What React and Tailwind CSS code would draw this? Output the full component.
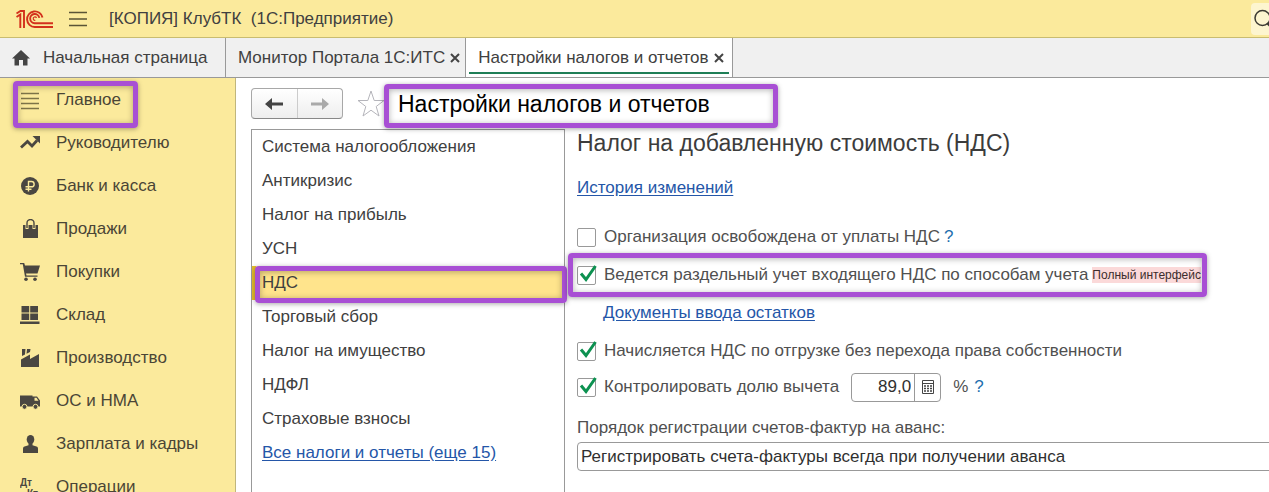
import React from "react";

const Icon = ({ children }) => (
  <svg viewBox="0 0 20 20" className="size-5 shrink-0" fill="#4a4741" aria-hidden="true">
    {children}
  </svg>
);

const sections = [
  {
    label: "Главное",
    marked: true,
    icon: <path d="M1 3.5h18M1 8.5h18M1 13.5h18M1 18.5h18" stroke="#7d7448" strokeWidth="1.4" fill="none" />,
  },
  {
    label: "Руководителю",
    icon: (
      <>
        <path d="M1 14.5l6.5-6 4.5 4.5 5-5.500" stroke="#4a4741" strokeWidth="2.8" fill="none" />
        <path d="M12.500 3H20v7.500z" />
      </>
    ),
  },
  {
    label: "Банк и касса",
    icon: (
      <>
        <circle cx="10" cy="10" r="9" />
        <path d="M8.500 15.500V5.500h3a2.600 2.600 0 0 1 0 5.300H5.500M5.500 13.200h6" stroke="#fbea9c" strokeWidth="1.4" fill="none" />
      </>
    ),
  },
  {
    label: "Продажи",
    icon: (
      <>
        <path d="M3 6h15v13H3z" />
        <path d="M7 10V5M14 10V5" stroke="#fbea9c" strokeWidth="3" fill="none" />
        <path d="M7 9V4a3.500 3.500 0 0 1 7 0V9" stroke="#4a4741" strokeWidth="1.400" fill="none" />
      </>
    ),
  },
  {
    label: "Покупки",
    icon: (
      <>
        <path d="M0 1h4.200l.8 2.500h15l-2.500 8H6l.5 2H17.500v1.300H5L2.800 2.300H0z" />
        <circle cx="6" cy="17.300" r="1.800" />
        <circle cx="15" cy="17.300" r="1.800" />
      </>
    ),
  },
  {
    label: "Склад",
    icon: <path d="M1.500 1h7.700v6.500H1.500zM10.200 1H18v6.500h-7.800zM1.500 8.500h7.700V15H1.500zM10.200 8.500H18V15h-7.800zM0 16.500h19.500V19H0z" />,
  },
  {
    label: "Производство",
    icon: <path d="M1 19v-7.500l9-5V11l9-5v13zM2 1h3.500L5 6.500 2 8zM7 1h3.500L10 4 6.500 5.800z" />,
  },
  {
    label: "ОС и НМА",
    icon: (
      <>
        <path d="M0 4.500h12.500v11H0zM12.500 5.500H17l3 4v6h-7.500z" />
        <path d="M14.500 6.800h2l2 3h-4z" fill="#fbea9c" />
        <circle cx="4.500" cy="15.800" r="2.500" stroke="#fbea9c" />
        <circle cx="15.500" cy="15.800" r="2.500" stroke="#fbea9c" />
      </>
    ),
  },
  {
    label: "Зарплата и кадры",
    icon: (
      <>
        <ellipse cx="10.500" cy="5.500" rx="3.800" ry="4.500" />
        <path d="M8.500 8h4v3.200l4 1.300c1 .4 1.500 1 1.500 2.500v4H3v-4c0-1.500.5-2.100 1.500-2.500l4-1.300z" />
      </>
    ),
  },
  {
    label: "Операции",
    icon: (
      <g className="font-bold" fontFamily="Liberation Sans, sans-serif" fontSize="10">
        <text x="0" y="9">Дт</text>
        <text x="7" y="20">Кт</text>
      </g>
    ),
  },
];

const taxes = [
  "Система налогообложения",
  "Антикризис",
  "Налог на прибыль",
  "УСН",
  "НДС",
  "Торговый сбор",
  "Налог на имущество",
  "НДФЛ",
  "Страховые взносы",
];

const Marker = ({ className }) => (
  <span
    aria-hidden="true"
    className={`pointer-events-none absolute z-10 rounded border-[5px] border-[#a84fd4] shadow-[0_1px_5px_rgba(0,0,0,0.35),inset_0_1px_6px_rgba(0,0,0,0.3)] ${className}`}
  />
);

const Close = ({ label }) => (
  <button type="button" aria-label={label} className="flex size-3 items-center justify-center">
    <svg viewBox="0 0 10 10" className="size-2.5">
      <path d="M1 1l8 8M9 1L1 9" stroke="#444" strokeWidth="2" />
    </svg>
  </button>
);

const Check = ({ id, label, checked, children }) => (
  <div className="flex h-[30px] items-center">
    <span className="relative mr-2 flex size-[19px] shrink-0">
      <input
        id={id}
        type="checkbox"
        defaultChecked={checked}
        className="peer size-[19px] appearance-none rounded-xs border border-[#999] bg-white"
      />
      <svg viewBox="0 0 19 19" className="pointer-events-none absolute inset-0 hidden size-[19px] overflow-visible peer-checked:block">
        <path d="M4 7.500l5 6L18.500 0" stroke="#0c9150" strokeWidth="3" fill="none" />
      </svg>
    </span>
    <label htmlFor={id} className="whitespace-nowrap">{label}</label>
    {children}
  </div>
);

const Help = ({ className }) => (
  <button type="button" aria-label="Справка" className={`text-[#1f6fae] ${className}`}>?</button>
);

export default function App() {
  return (
    <div className="flex h-screen flex-col overflow-hidden bg-white font-['Liberation_Sans',Arial,sans-serif] text-[17px] leading-5 text-[#404040]">
      <header className="flex h-[38px] shrink-0 items-center border-b border-[#c9bc70] bg-[#fbea9c] pl-4">
        <svg viewBox="0 0 38 20" className="h-5 w-[38px]" fill="none" stroke="#d3301c" strokeWidth="1.900" role="img" aria-label="1С">
          <path d="M.5 4.500L4.500 2H8V19M.5 8L4.300 5.500V19" />
          <path d="M26.500 8.500a7.800 7.800 0 1 0-7.800 9.500H37" />
          <path d="M23.300 8.800a4.600 4.600 0 1 0-4.600 5.400H37" />
          <path d="M20.500 9a1.700 1.700 0 1 0-1.200 2.300" strokeWidth="1.200" />
        </svg>
        <button type="button" aria-label="Меню" className="ml-[15px]">
          <svg viewBox="0 0 18 18" className="size-[18px]">
            <path d="M0 2.500h18M0 9h18M0 15.500h18" stroke="#5a5436" strokeWidth="1.500" />
          </svg>
        </button>
        <span className="ml-[22px] whitespace-pre">[КОПИЯ] КлубТК  (1С:Предприятие)</span>
        <button type="button" aria-label="Поиск" className="ml-auto flex h-8 w-[18px] items-center overflow-hidden rounded-l bg-[#fdf5cf] pl-[3px]">
          <svg viewBox="0 0 24 24" className="size-6 shrink-0" fill="none" stroke="#3c3a33">
            <circle cx="8.500" cy="11" r="7.500" strokeWidth="1.500" />
            <path d="M13.500 16l7 7" strokeWidth="3" />
          </svg>
        </button>
      </header>

      <nav aria-label="Открытые страницы" className="flex h-10 shrink-0 border-b border-[#999] bg-[#f0f0f0]">
        <a href="#home" className="flex w-[226px] items-center border-r border-[#999] pl-3 whitespace-nowrap">
          <svg viewBox="0 0 18 16" className="mr-[13px] h-4 w-[18px] shrink-0" fill="#444">
            <path d="M9 0l9 8.500h-2.500V15.500h-4.500V10H7v5.500H2.500V8.500H0z" />
          </svg>
          Начальная страница
        </a>
        <div className="flex items-center gap-1 border-r border-[#999] pr-1 pl-3 whitespace-nowrap">
          <a href="#monitor">Монитор Портала 1С:ИТС</a>
          <Close label="Закрыть монитор" />
        </div>
        <div className="flex border-r border-[#999] bg-white px-[3px]">
          <div className="mb-[3px] flex items-center gap-1 border-b-2 border-[#1f7f57] pt-[5px] pr-1 pl-[9px] whitespace-nowrap">
            <a href="#settings" aria-current="page">Настройки налогов и отчетов</a>
            <Close label="Закрыть настройки" />
          </div>
        </div>
      </nav>

      <div className="flex min-h-0 flex-1">
        <nav aria-label="Разделы" className="w-[236px] shrink-0 border-r border-[#c0b67c] bg-[#fbea9c] text-[#4a4536]">
          {sections.map((s) => (
            <a key={s.label} href={`#${s.label}`} className="relative flex h-[43px] items-center gap-4 pl-5">
              <Icon>{s.icon}</Icon>
              {s.label}
              {s.marked && <Marker className="top-[3px] left-[13px] h-[47px] w-[125px]" />}
            </a>
          ))}
        </nav>

        <main className="flex min-w-0 flex-1 flex-col pl-[15px]">
          <div className="flex h-[51px] shrink-0 items-center">
            <div className="flex h-[31px] w-[92px] rounded border border-[#a8a8a8] border-b-[#888] bg-linear-to-b from-white to-[#eee]">
              <button type="button" aria-label="Назад" className="flex flex-1 items-center justify-center border-r border-[#ccc]">
                <svg viewBox="0 0 18 12" className="h-3 w-[18px]">
                  <path d="M7 0v4.500h11v3H7V12L0 6z" fill="#444" />
                </svg>
              </button>
              <button type="button" aria-label="Вперед" className="flex flex-1 items-center justify-center">
                <svg viewBox="0 0 18 12" className="h-3 w-[18px]">
                  <path d="M11 0v4.500H0v3h11V12l7-6z" fill="#aaa" />
                </svg>
              </button>
            </div>
            <button type="button" aria-label="В избранное" className="ml-3.5">
              <svg viewBox="0 0 28 28" className="size-7">
                <path d="M14 1l3.200 9.500H27l-7.800 6L22 26l-8-5.800L6 26l2.800-9.500L1 10.500h9.800z" fill="#fff" stroke="#b5b5bb" />
              </svg>
            </button>
            <div className="relative ml-[13px]">
              <h1 className="text-[23px] leading-7 whitespace-nowrap text-black">Настройки налогов и отчетов</h1>
              <Marker className="-top-[6px] -left-[14px] h-11 w-[394px]" />
            </div>
          </div>

          <div className="flex min-h-0 flex-1">
            <div className="w-[314px] shrink-0 border-x border-t border-[#999]">
              <ul>
                {taxes.map((t) => (
                  <li key={t} className="relative">
                    <button
                      type="button"
                      className={`flex h-[34px] w-full items-center pl-2.5 ${t === "НДС" ? "bg-[#ffe48c] shadow-[inset_4px_0_0_#e3bd2c]" : ""}`}
                    >
                      {t}
                    </button>
                    {t === "НДС" && <Marker className="top-0 left-[3px] h-[37px] w-[312px]" />}
                  </li>
                ))}
              </ul>
              <a href="#all" className="ml-2.5 flex h-[34px] items-center text-[#2456a8] underline underline-offset-2">
                Все налоги и отчеты (еще 15)
              </a>
            </div>

            <form className="ml-3 flex min-w-0 flex-1 flex-col text-[#505050]">
              <h2 className="text-[23px] leading-7 whitespace-nowrap text-[#3c3c3c]">Налог на добавленную стоимость (НДС)</h2>
              <a href="#history" className="mt-[21px] self-start text-[#2456a8] underline underline-offset-2">История изменений</a>
              <div className="mt-6">
                <Check id="exempt" label="Организация освобождена от уплаты НДС">
                  <Help className="ml-1" />
                </Check>
              </div>
              <div className="relative mt-2 self-start">
                <Check id="separate" label="Ведется раздельный учет входящего НДС по способам учета" checked>
                  <span className="ml-1 bg-[#fbd9d9] text-[12px] leading-4 whitespace-nowrap text-[#3c2c2c]">Полный интерфейс</span>
                </Check>
                <Marker className="-top-[7px] -right-[6px] -left-[9px] h-11" />
              </div>
              <a href="#docs" className="mt-[13px] ml-[26px] self-start text-[#2456a8] underline underline-offset-2">Документы ввода остатков</a>
              <div className="mt-[13px]">
                <Check id="shipment" label="Начисляется НДС по отгрузке без перехода права собственности" checked />
              </div>
              <div className="mt-1.5">
                <Check id="share" label="Контролировать долю вычета" checked>
                  <div className="ml-3 flex h-[29px] w-[90px] rounded-sm border border-[#999] bg-white">
                    <input aria-label="Доля вычета" defaultValue="89,0" className="w-[63px] min-w-0 border-r border-[#999] pr-[3px] text-right text-[#303030]" />
                    <button type="button" aria-label="Калькулятор" className="flex flex-1 items-center justify-center">
                      <svg viewBox="0 0 12 14" className="h-3.5 w-3" fill="none" stroke="#444">
                        <path d="M.5.5h11v13H.5zM.5 3.500h11" />
                        <path d="M2 6h8M2 8.500h8M2 11h8" strokeWidth="1.500" strokeDasharray="2 1" />
                      </svg>
                    </button>
                  </div>
                  <span className="ml-3">%</span>
                  <Help className="ml-1.5" />
                </Check>
              </div>
              <label htmlFor="order" className="mt-4">Порядок регистрации счетов-фактур на аванс:</label>
              <select id="order" className="mt-1 -mr-1 h-[29px] shrink-0 appearance-none rounded-sm border border-[#999] bg-white pl-[3px] text-[#303030]">
                <option>Регистрировать счета-фактуры всегда при получении аванса</option>
              </select>
              <h3 className="mt-[18px] text-[19px] leading-5 whitespace-nowrap text-[#1f7f57]">Подтверждение ставки 0%</h3>
            </form>
          </div>
        </main>
      </div>
    </div>
  );
}
